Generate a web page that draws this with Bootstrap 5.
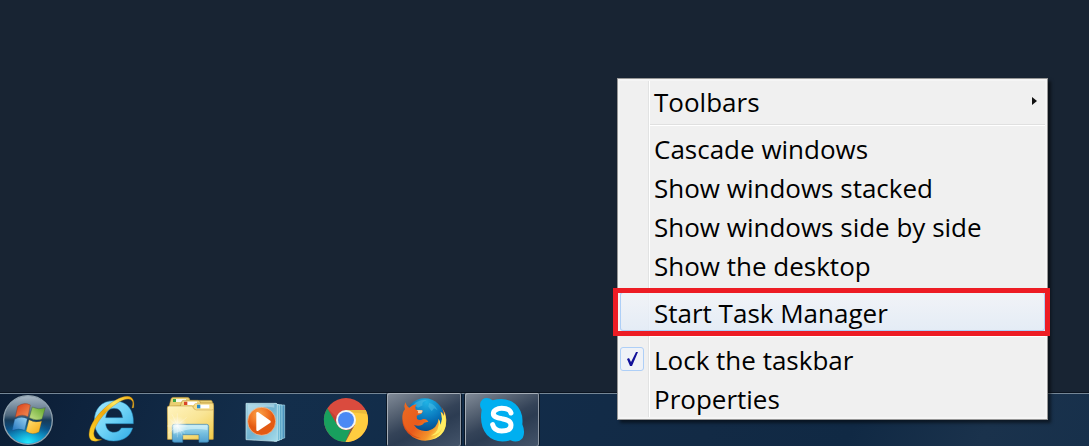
<!DOCTYPE html>
<html lang="en">
<head>
<meta charset="utf-8">
<meta name="viewport" content="width=device-width, initial-scale=1">
<title>Desktop</title>
<link href="https://cdn.jsdelivr.net/npm/bootstrap@5.3.0/dist/css/bootstrap.min.css" rel="stylesheet">
<style>
body { background: #182433; font-family: "Open Sans", "Noto Sans", sans-serif; }
.taskbar {
  height: 54px; gap: 4px; border-top: 1px solid #0a131f;
  box-shadow: inset 0 1px #758797;
  background: linear-gradient(115deg, #0b1d34 0%, #0e233d 8%, #132e4b 25%, #122c49 45%, #122a45 65%, #102944 78%, #1a324c 90%, #17304b 100%);
}
.task-btn { width: 74px; border-radius: 2px; padding-top: 1px; }
.task-btn svg { width: 74px; height: 52px; display: block; }
.start-btn, .start-btn svg { width: 71px; }
.task-open {
  background: linear-gradient(155deg, #828c99 0%, #5b6777 25%, #344358 50%, #2c3c52 62%, #44546a 100%);
  box-shadow: inset 1px 1px #a4adb7, inset -1px 0 #8e98a4, -1px 0 #0a1726, 1px 0 #0a1726;
}
.context-menu {
  right: 41px; bottom: 26px; width: 431px; padding: 2px;
  background: #f0f0f0; border: 1px solid #979797;
  box-shadow: inset 0 0 0 2px #f5f5f5, 3px 3px 3px rgba(0, 0, 0, .5);
}
.menu-body { background: linear-gradient(90deg, transparent 28px, #e2e3e3 28px, #e2e3e3 29px, #fff 29px, #fff 30px, transparent 30px); }
.menu-row {
  height: 39px; padding: 4px 8px 0 34px; color: #000; text-align: left;
  font-size: 26px; line-height: 35px; white-space: nowrap;
}
.menu-sep { height: 8px; margin: 0 0 0 30px; padding: 4px 0 2px; }
.menu-sep::before { content: ""; display: block; height: 2px; background: linear-gradient(#e0e0e0 50%, #fff 50%); }
.menu-hot { background: linear-gradient(rgba(242, 244, 249, .8), rgba(225, 235, 247, .8)); box-shadow: inset 0 0 0 1px #aecff7; border-radius: 3px; }
.hot-frame { inset: -4px -5px -5px -7px; border: 5px solid #ed1c24; pointer-events: none; }
.check-row { padding-left: 0; padding-top: 0; gap: 10px; }
.check-row span { padding-top: 4px; }
.menu-check {
  appearance: none; width: 24px; height: 24px; margin: 0; border: 1px solid #aecff7; border-radius: 3px;
  background: #eff2f7 url("data:image/svg+xml,%3Csvg xmlns='http://www.w3.org/2000/svg' viewBox='0 0 22 22'%3E%3Cpath d='M6 11l2-1 2 4 5-10h2l-6 14H9z' fill='%2312129a'/%3E%3C/svg%3E") center / 22px no-repeat;
}
</style>
</head>
<body class="min-vh-100 d-flex flex-column position-relative overflow-hidden">
<main class="flex-grow-1" aria-label="Desktop"></main>

<nav class="taskbar d-flex" aria-label="Taskbar">
  <button class="task-btn start-btn btn border-0 px-0 pb-0" type="button" aria-label="Start">
    <svg viewBox="0 24 213 156">
      <defs>
        <linearGradient id="orb" x1="0" y1="0" x2="0" y2="1"><stop offset="0" stop-color="#a9b8c5"/><stop offset=".4" stop-color="#50697f"/><stop offset=".5" stop-color="#173b59"/><stop offset=".7" stop-color="#0a5288"/><stop offset="1" stop-color="#12bbee"/></linearGradient>
        <radialGradient id="orbGlow" cx=".5" cy="1" r=".55"><stop offset="0" stop-color="#25edff"/><stop offset="1" stop-color="#0687c7" stop-opacity="0"/></radialGradient>
        <linearGradient id="wr" x1="0" y1="0" x2="1" y2="1"><stop offset="0" stop-color="#d83a16"/><stop offset="1" stop-color="#f49358"/></linearGradient>
        <linearGradient id="wg" x1="0" y1="1" x2="1" y2="0"><stop offset="0" stop-color="#c9e28d"/><stop offset="1" stop-color="#5ba526"/></linearGradient>
        <linearGradient id="wb" x1="0" y1="1" x2="1" y2="0"><stop offset="0" stop-color="#2073bd"/><stop offset="1" stop-color="#9bd4f3"/></linearGradient>
        <linearGradient id="wy" x1="0" y1="0" x2="1" y2="1"><stop offset="0" stop-color="#ffe27a"/><stop offset="1" stop-color="#f7a80e"/></linearGradient>
      </defs>
      <circle cx="84" cy="102" r="76" fill="#0a1a2b"/>
      <circle cx="84" cy="102" r="73" fill="url(#orb)" stroke="#8ea1af" stroke-width="4"/>
      <circle cx="84" cy="102" r="70" fill="url(#orbGlow)"/>
      <path d="M53 61Q72 47 91 57L84 92Q66 82 46 94Z" fill="url(#wr)" stroke="#682b21" stroke-width="1"/>
      <path d="M97 63Q116 73 136 65L126 99Q107 106 88 95Z" fill="url(#wg)" stroke="#34512b" stroke-width="1"/>
      <path d="M44 100Q63 88 82 98L74 133Q55 125 36 134Z" fill="url(#wb)" stroke="#174a78" stroke-width="1"/>
      <path d="M87 101Q106 112 125 105L117 138Q97 149 78 136Z" fill="url(#wy)" stroke="#75581e" stroke-width="1"/>
    </svg>
  </button>
  <button class="task-btn btn border-0 px-0 pb-0" type="button" aria-label="Internet Explorer">
    <svg viewBox="-15 24 222 156">
      <defs>
        <linearGradient id="ie" x1="0" y1="0" x2="1" y2="1"><stop offset="0" stop-color="#a7e9fc"/><stop offset=".5" stop-color="#6ed2f6"/><stop offset="1" stop-color="#2daae4"/></linearGradient>
        <linearGradient id="ring" x1="0" y1="1" x2="1" y2="0"><stop offset="0" stop-color="#ffd52a"/><stop offset=".5" stop-color="#f0a90a"/><stop offset=".7" stop-color="#ffec62"/><stop offset="1" stop-color="#efa409"/></linearGradient>
      </defs>
      <path fill="url(#ie)" stroke="#2488bd" stroke-width="1.5" fill-rule="evenodd" d="M101 44C64 44 43 70 43 104C43 141 66 165 101 165C131 165 151 150 158 126L124 126C119 135 112 139 102 139C88 139 78 129 77 113L160 113C163 71 140 44 101 44ZM77 95C80 76 88 67 102 67C117 67 125 76 128 95Z"/>
      <path fill="url(#ring)" stroke="#b67507" stroke-width="1" d="M161 65C164 44 158 32 143 31C106 29 35 91 28 137C24 158 34 168 51 165L65 161C55 161 44 160 42 148C38 124 69 81 108 54C130 39 151 34 157 46C160 51 158 58 156 66Z"/>
    </svg>
  </button>
  <button class="task-btn btn border-0 px-0 pb-0" type="button" aria-label="Windows Explorer">
    <svg viewBox="-6 24 222 156">
      <defs>
        <linearGradient id="fold" x1="0" y1="0" x2="1" y2="1"><stop offset="0" stop-color="#fff4bf"/><stop offset=".5" stop-color="#f9e596"/><stop offset="1" stop-color="#f1ca45"/></linearGradient>
        <linearGradient id="stand" x1="0" y1="0" x2="0" y2="1"><stop offset="0" stop-color="#b9e6ef"/><stop offset=".5" stop-color="#76bfdf"/><stop offset="1" stop-color="#4f9fd0"/></linearGradient>
        <radialGradient id="flare"><stop offset="0" stop-color="#fff"/><stop offset="1" stop-color="#fff" stop-opacity="0"/></radialGradient>
      </defs>
      <path d="M42 61L48 38Q50 34 56 34L97 34Q104 34 105 43L168 43Q174 44 173 60L173 155L42 155Z" fill="#e9cf73" stroke="#9f7b25" stroke-width="1.5"/>
      <path d="M54 39H93V48H54Z" fill="#f9f9ec"/><path d="M54 39h9v9h-9Z" fill="#3ba644"/>
      <path d="M38 62L76 60L81 45Q83 43 88 43H129Q135 43 137 51H175L173 160H38Z" fill="#f2db86" stroke="#aa8431" stroke-width="1.5"/>
      <path d="M87 47H126V57H87Z" fill="#fff"/><path d="M87 47h10v10H87Z" fill="#d94425"/>
      <path d="M37 66Q37 60 43 60H109Q113 60 115 65L119 70H176L175 160H38Z" fill="url(#fold)" stroke="#ba9238" stroke-width="1.5"/>
      <path d="M115 65L118 55Q120 52 126 52H171Q176 53 176 59V69Q175 72 171 72H122Z" fill="#f9df87" stroke="#aa8431" stroke-width="1"/>
      <path d="M126 56H163V67H126Z" fill="#fff"/><path d="M126 56h10v11h-10Z" fill="#288cc8"/>
      <path d="M52 120Q52 115 58 115H155Q161 115 161 121V164Q161 169 155 169H132V146H83V169H58Q52 169 52 163Z" fill="url(#stand)" stroke="#397fa9" stroke-width="2"/>
      <path d="M56 118H157V132Q106 122 56 143Z" fill="#e5fbff" opacity=".5"/>
      <circle cx="67" cy="119" r="29" fill="url(#flare)" opacity=".85"/>
      <path d="M67 82V154M36 120H98M42 98L90 142M39 142L95 94M51 85L83 151" stroke="#fff" stroke-width="1.5" opacity=".55"/>
    </svg>
  </button>
  <button class="task-btn btn border-0 px-0 pb-0" type="button" aria-label="Windows Media Player">
    <svg viewBox="-12 24 222 156">
      <defs>
        <linearGradient id="case" x1="0" y1="0" x2="1" y2="1"><stop offset="0" stop-color="#98cddd"/><stop offset=".5" stop-color="#72b3cf"/><stop offset="1" stop-color="#a5dceb"/></linearGradient>
        <radialGradient id="play" cx=".4" cy=".25"><stop offset="0" stop-color="#f9a44b"/><stop offset=".6" stop-color="#f27828"/><stop offset="1" stop-color="#e35a13"/></radialGradient>
      </defs>
      <path d="M119 57L149 57V156L119 162Z" fill="#4b94bd" stroke="#a4d5e5" stroke-width="2"/>
      <path d="M119 55L141 57V160L119 164Z" fill="#5da7c8" stroke="#b2e2ef" stroke-width="2"/>
      <path d="M119 53L133 57V163L119 166Z" fill="#6cb7d4" stroke="#c2eef6" stroke-width="2"/>
      <path d="M33 52L123 52Q127 52 127 57V162Q127 167 122 166L33 161Z" fill="url(#case)" stroke="#d0edf3" stroke-width="2"/>
      <path d="M38 55H118V65Q72 52 38 94Z" fill="#e9f7fb" opacity=".35"/>
      <circle cx="80" cy="106" r="42" fill="url(#play)" stroke="#f7c298" stroke-width="2"/>
      <path d="M64 82Q64 76 70 79L106 104Q109 107 106 110L70 134Q64 137 64 131Z" fill="#fff"/>
    </svg>
  </button>
  <button class="task-btn btn border-0 px-0 pb-0" type="button" aria-label="Google Chrome">
    <svg viewBox="-9 24 222 156">
      <circle cx="102" cy="102" r="66" fill="#da4b3e"/>
      <path d="M102 72H161A66 66 0 0 1 100 168L128 117Z" fill="#ffcd40"/>
      <path d="M46 67L76 117Q90 138 116 130L100 168A66 66 0 0 1 46 67Z" fill="#18a05e"/>
      <path d="M102 72H161L165 84L110 78Z" fill="#b48428" opacity=".25"/>
      <path d="M46 67L76 117L78 98Z" fill="#7b241c" opacity=".25"/>
      <path d="M128 117L100 168L116 130Z" fill="#087541" opacity=".4"/>
      <circle cx="102" cy="102" r="30" fill="#f4f4f4"/>
      <circle cx="102" cy="102" r="24" fill="#4b89f4"/>
    </svg>
  </button>
  <button class="task-btn task-open btn border-0 px-0 pb-0" type="button" aria-label="Mozilla Firefox">
    <svg viewBox="15 24 222 156">
      <defs>
        <radialGradient id="globe" cx=".55" cy=".1" r=".9"><stop offset="0" stop-color="#20b3e5"/><stop offset=".5" stop-color="#0875bb"/><stop offset="1" stop-color="#063871"/></radialGradient>
        <linearGradient id="fox" x1="0" y1="0" x2="1" y2=".6"><stop offset="0" stop-color="#ec6c21"/><stop offset=".5" stop-color="#e95b1c"/><stop offset=".8" stop-color="#f3912a"/><stop offset="1" stop-color="#ffe34d"/></linearGradient>
      </defs>
      <circle cx="128" cy="95" r="58" fill="url(#globe)"/>
      <path d="M94 56Q111 39 135 43Q117 48 122 58L108 65ZM141 51Q158 54 167 73L156 67L149 76L139 62Z" fill="#5fc7ea" opacity=".4"/>
      <path fill="url(#fox)" d="M70 49Q75 63 82 65Q91 56 104 55Q97 63 101 71L121 73Q124 78 118 83L104 89L105 99Q114 105 123 99Q135 97 139 108Q127 106 121 116Q110 122 96 117Q111 139 139 134Q165 128 170 99Q176 108 175 118Q184 98 176 78Q184 80 186 91Q186 73 177 62Q192 77 193 102Q194 142 162 157Q124 173 92 153Q61 132 61 99Q60 79 69 70Q65 59 70 49Z"/>
      <path d="M170 99Q174 139 147 149Q171 147 181 125Q174 152 145 161Q178 155 189 125Q195 98 186 79L186 91Q182 82 176 78Q184 98 175 118Q176 108 170 99Z" fill="#ffed63"/>
      <path d="M104 72L121 73Q123 77 118 82L107 82Q111 76 104 72Z" fill="#f7d0a4"/>
      <path d="M62 100Q68 144 117 157Q87 157 69 130Q60 116 62 100Z" fill="#c93916" opacity=".5"/>
    </svg>
  </button>
  <button class="task-btn task-open btn border-0 px-0 pb-0" type="button" aria-label="Skype">
    <svg viewBox="15 24 222 156">
      <path d="M65 71Q54 53 68 40Q81 31 98 43Q137 31 166 54Q191 76 187 115Q197 139 188 156Q174 173 151 163Q107 174 81 147Q57 119 65 71Z" fill="#00aff0"/>
      <path d="M153 81C150 71 139 67 125 67C111 67 100 74 100 83C100 92 111 95 126 98C144 101 153 106 153 117C153 129 142 135 125 135C110 135 101 128 98 116" fill="none" stroke="#fff" stroke-width="15" stroke-linecap="round"/>
    </svg>
  </button>
</nav>

<div class="context-menu position-absolute" role="menu" aria-label="Taskbar options">
  <div class="menu-body d-flex flex-column">
    <button class="menu-row btn border-0 rounded-0 d-flex justify-content-between" type="button" role="menuitem">Toolbars
      <svg width="5" height="35" viewBox="0 0 5 35" aria-hidden="true"><path d="M0 12L5 16L0 20Z" fill="#111"/></svg>
    </button>
    <div class="menu-sep" role="separator"></div>
    <button class="menu-row btn border-0 rounded-0" type="button" role="menuitem">Cascade windows</button>
    <button class="menu-row btn border-0 rounded-0" type="button" role="menuitem">Show windows stacked</button>
    <button class="menu-row btn border-0 rounded-0" type="button" role="menuitem">Show windows side by side</button>
    <button class="menu-row btn border-0 rounded-0" type="button" role="menuitem">Show the desktop</button>
    <div class="menu-sep" role="separator"></div>
    <button class="menu-row menu-hot btn border-0 position-relative" type="button" role="menuitem">Start Task Manager<span class="hot-frame position-absolute"></span></button>
    <div class="menu-sep" role="separator"></div>
    <label class="menu-row check-row d-flex align-items-center" for="lock"><input class="menu-check" id="lock" type="checkbox" checked><span>Lock the taskbar</span></label>
    <button class="menu-row btn border-0 rounded-0" type="button" role="menuitem">Properties</button>
  </div>
</div>
<script src="https://cdn.jsdelivr.net/npm/bootstrap@5.3.0/dist/js/bootstrap.bundle.min.js"></script>
</body>
</html>
